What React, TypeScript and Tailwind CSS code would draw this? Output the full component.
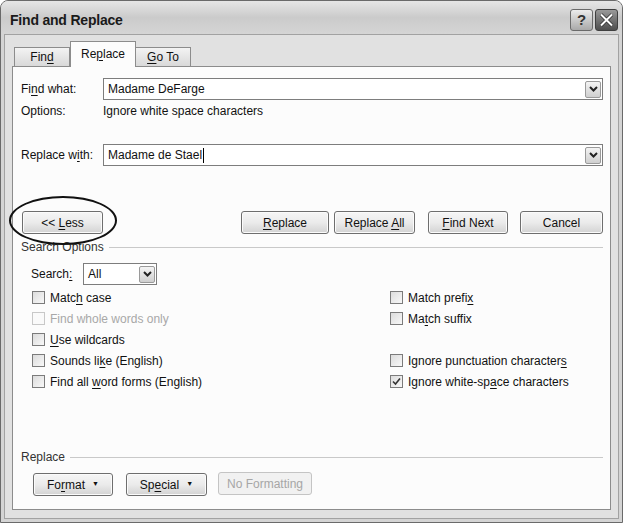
import type { ReactNode } from 'react';

const U = ({ children }: { children: ReactNode }) => (
  <span className="underline decoration-1 underline-offset-[2px]">{children}</span>
);

const Chevron = () => (
  <svg width="9" height="6" viewBox="0 0 9 6">
    <path d="M1 1 L4.5 4.5 L8 1" fill="none" stroke="#222" strokeWidth="2" />
  </svg>
);

const DropBtn = () => (
  <div className="flex h-[17px] w-[16px] items-center justify-center rounded-[2px] border border-[#9a9a9a] bg-gradient-to-b from-[#f4f4f4] to-[#cfcfcf]">
    <Chevron />
  </div>
);

interface BtnProps {
  children: ReactNode;
  className?: string;
  disabled?: boolean;
}

const Btn = ({ children, className, disabled }: BtnProps) => (
  <div
    className={
      'flex h-[23px] items-center justify-center rounded-[3px] border ' +
      (disabled
        ? 'border-[#c4c4c4] bg-[#f1f1f1] text-[#a6a6a6] '
        : 'border-[#6e6e6e] bg-gradient-to-b from-[#f6f6f6] via-[#ebebeb] to-[#d3d3d3] text-[#111] shadow-[inset_0_0_0_1px_#fbfbfb] ') +
      (className ?? '')
    }
  >
    {children}
  </div>
);

const Check = ({ label, checked, disabled }: { label: ReactNode; checked?: boolean; disabled?: boolean }) => (
  <div className="flex h-[21px] items-center gap-[5px]">
    <div
      className={
        'flex h-[13px] w-[13px] items-center justify-center border ' +
        (disabled ? 'border-[#c8c8c8] bg-[#fafafa]' : 'border-[#7b7b7b] bg-gradient-to-br from-[#dcdcdc] to-[#f8f8f8]')
      }
    >
      {checked && (
        <svg width="9" height="9" viewBox="0 0 9 9">
          <path d="M1 4.5 L3.5 7 L8 1.5" fill="none" stroke="#333" strokeWidth="1.6" />
        </svg>
      )}
    </div>
    <span className={disabled ? 'text-[#a8a8a8]' : 'text-[#111]'}>{label}</span>
  </div>
);

const GroupHeader = ({ children }: { children: ReactNode }) => (
  <div className="flex h-[14px] items-center">
    <span className="text-[#333]">{children}</span>
    <div className="ml-[5px] h-px flex-1 bg-[#c9c9c9]" />
  </div>
);

export default function App() {
  return (
    <div className="h-[527px] w-[624px] bg-white font-['Liberation_Sans',Arial,sans-serif] text-[12px] text-[#111]">
      <div className="flex h-[523px] w-[623px] flex-col rounded-t-[8px] border border-[#6a6a6a] bg-[#d4d4d4]">
        {/* title bar */}
        <div className="flex h-[33px] items-center justify-between rounded-t-[7px] bg-gradient-to-b from-[#e6e6e6] via-[#cbcbcb] to-[#d5d5d5] pl-[9px] pr-[4px]">
          <span className="pt-[5px] text-[14px] font-bold tracking-[-0.2px] text-[#1a1a1a]">Find and Replace</span>
          <div className="flex gap-[2px] pt-[5px]">
            <div className="flex h-[22px] w-[23px] items-center justify-center rounded-[3px] border border-[#6a6a6a] bg-gradient-to-b from-[#ececec] to-[#a9a9a9] text-[15px] font-bold text-[#333]">
              ?
            </div>
            <div className="flex h-[22px] w-[23px] items-center justify-center rounded-[3px] border border-[#3f3f3f] bg-gradient-to-b from-[#9a9a9a] to-[#4e4e4e]">
              <svg width="15" height="14" viewBox="0 0 15 14">
                <path d="M2 1.5 L13 12.5 M13 1.5 L2 12.5" stroke="#333" strokeWidth="3.6" />
                <path d="M2 1.5 L13 12.5 M13 1.5 L2 12.5" stroke="#fff" strokeWidth="2" />
              </svg>
            </div>
          </div>
        </div>

        {/* client area */}
        <div className="mx-[3px] mb-[3px] flex flex-1 flex-col border border-[#a2a2a2] bg-[#e1e1e1] px-[7px] pb-[8px] pt-[6px]">
          {/* tabs */}
          <div className="flex items-end pl-[2px]">
            <div className="flex h-[19px] w-[56px] items-center justify-center border border-b-0 border-[#8c8c8c] bg-gradient-to-b from-[#f3f3f3] to-[#d9d9d9]">
              <span>
                Fin<U>d</U>
              </span>
            </div>
            <div className="relative z-10 -mb-px flex h-[26px] w-[66px] items-center justify-center border border-b-0 border-[#8c8c8c] bg-[#fcfcfc] pb-[2px]">
              <span>
                Re<U>p</U>lace
              </span>
            </div>
            <div className="flex h-[19px] w-[55px] items-center justify-center border border-b-0 border-l-0 border-[#8c8c8c] bg-gradient-to-b from-[#f3f3f3] to-[#d9d9d9]">
              <span>
                <U>G</U>o To
              </span>
            </div>
          </div>

          {/* panel */}
          <div className="flex flex-1 flex-col border border-[#8c8c8c] bg-[#fcfcfc] pl-[8px] pr-[7px]">
            <div className="mt-[11px] flex h-[22px] items-center">
              <span className="w-[82px]">
                Fi<U>n</U>d what:
              </span>
              <div className="flex h-[22px] flex-1 items-center justify-between border border-[#7d7d7d] bg-white pl-[4px] pr-[1px]">
                <span>Madame DeFarge</span>
                <DropBtn />
              </div>
            </div>

            <div className="mt-[3px] flex h-[16px] items-center">
              <span className="w-[82px]">Options:</span>
              <span>Ignore white space characters</span>
            </div>

            <div className="mt-[25px] flex h-[22px] items-center">
              <span className="w-[82px]">
                Replace w<U>i</U>th:
              </span>
              <div className="flex h-[22px] flex-1 items-center justify-between border border-[#7d7d7d] bg-white pl-[4px] pr-[1px]">
                <span className="flex items-center">
                  Madame de Stael<span className="ml-[1px] h-[15px] w-px bg-black" />
                </span>
                <DropBtn />
              </div>
            </div>

            {/* action buttons */}
            <div className="mt-[45px] flex h-[23px] items-center">
              <div className="relative ml-[1px]">
                <Btn className="w-[81px]">
                  <span>
                    &lt;&lt; <U>L</U>ess
                  </span>
                </Btn>
                <div className="pointer-events-none absolute left-[-13px] top-[-15px] h-[49px] w-[108px] rounded-[50%] border-2 border-[#111]" />
              </div>
              <div className="flex-1" />
              <Btn className="w-[88px]">
                <span>
                  <U>R</U>eplace
                </span>
              </Btn>
              <Btn className="ml-[5px] w-[81px]">
                <span>
                  Replace <U>A</U>ll
                </span>
              </Btn>
              <Btn className="ml-[13px] w-[80px]">
                <span>
                  <U>F</U>ind Next
                </span>
              </Btn>
              <Btn className="ml-[12px] w-[83px]">
                <span>Cancel</span>
              </Btn>
            </div>

            <div className="mt-[6px]">
              <GroupHeader>Search Options</GroupHeader>
            </div>

            <div className="mt-[9px] flex h-[22px] items-center pl-[10px]">
              <span className="w-[52px]">
                Search<U>:</U>
              </span>
              <div className="flex h-[22px] w-[74px] items-center justify-between border border-[#7d7d7d] bg-white pl-[4px] pr-[1px]">
                <span>All</span>
                <DropBtn />
              </div>
            </div>

            <div className="mt-[2px] flex pl-[11px]">
              <div className="flex w-[358px] flex-col">
                <Check label={<>Matc<U>h</U> case</>} />
                <Check label="Find whole words only" disabled />
                <Check label={<><U>U</U>se wildcards</>} />
                <Check label={<>Sounds li<U>k</U>e (English)</>} />
                <Check label={<>Find all <U>w</U>ord forms (English)</>} />
              </div>
              <div className="flex flex-col">
                <Check label={<>Match prefi<U>x</U></>} />
                <Check label={<>Ma<U>t</U>ch suffix</>} />
                <div className="h-[21px]" />
                <Check label={<>Ignore punctuation character<U>s</U></>} />
                <Check label={<>Ignore white-sp<U>a</U>ce characters</>} checked />
              </div>
            </div>

            <div className="mt-[58px]">
              <GroupHeader>Replace</GroupHeader>
            </div>

            <div className="mt-[9px] flex items-center pl-[12px]">
              <Btn className="w-[80px] gap-[7px]">
                <span>
                  Fo<U>r</U>mat
                </span>
                <span className="text-[7px]">▼</span>
              </Btn>
              <Btn className="ml-[13px] w-[81px] gap-[7px]">
                <span>
                  Sp<U>e</U>cial
                </span>
                <span className="text-[7px]">▼</span>
              </Btn>
              <div className="-mt-[2px] ml-[11px]">
                <Btn className="w-[94px]" disabled>
                  <span>No Formatting</span>
                </Btn>
              </div>
            </div>
          </div>
        </div>
      </div>
    </div>
  );
}
